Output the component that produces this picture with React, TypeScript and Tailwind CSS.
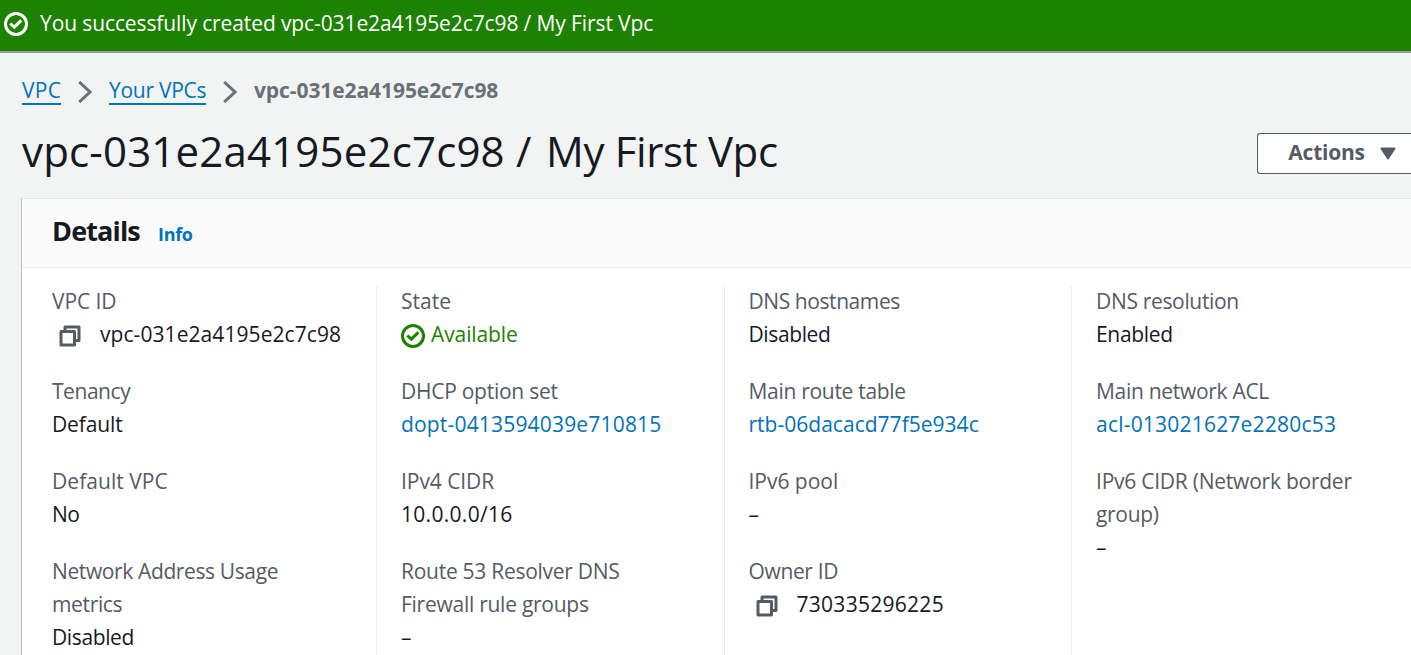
import type { ReactNode } from "react";

function StatusIcon({ className }: { className: string }) {
  return (
    <svg viewBox="0 0 24 24" className={`size-6 shrink-0 ${className}`} fill="none" stroke="currentColor" strokeWidth={3}>
      <circle cx="12" cy="12" r="10.5" />
      <path d="M6.3 11.5 L10.3 15.1 L17.3 8.3" />
    </svg>
  );
}

function CopyIcon() {
  return (
    <svg viewBox="0 0 22 22" className="mt-[7px] ml-[7px] size-[22px] shrink-0 text-[#545b64]" fill="none" stroke="currentColor" strokeWidth={3}>
      <path d="M6 6V2H20V15.5H16" strokeLinejoin="round" />
      <path d="M2 6.5H15.5V20H2Z" strokeLinejoin="round" />
    </svg>
  );
}

function Chevron() {
  return (
    <svg viewBox="0 0 14 22" className="mt-px h-[22px] w-[14px] shrink-0 text-[#687078]" fill="none" stroke="currentColor" strokeWidth={3}>
      <path d="M1.2 1 L12 11 L1.2 21" />
    </svg>
  );
}

function Field({ label, children }: { label: ReactNode; children: ReactNode }) {
  return (
    <div className="leading-[33px]">
      <div className="text-[#545b64]">{label}</div>
      <div className="flex h-[33px] text-[#16191f]">{children}</div>
    </div>
  );
}

function Column({ className, children }: { className: string; children: ReactNode }) {
  return (
    <div className={`shrink-0 ${className}`}>
      <div className="-mt-px flex flex-col gap-6">{children}</div>
    </div>
  );
}

export default function App() {
  return (
    <div className="flex h-[655px] w-[1411px] flex-col overflow-hidden bg-[#f2f3f3] font-['Open_Sans','Noto_Sans',sans-serif] text-[21px] whitespace-nowrap">
      <div className="flex h-[53px] shrink-0 border-b-2 border-[#959c9f] bg-[#1d8102] pl-1 text-white">
        <StatusIcon className="mt-3" />
        <span className="ml-3 pt-[7px] leading-[33px] tracking-[-0.11px]">
          You successfully created vpc-031e2a4195e2c7c98 / My First Vpc
        </span>
      </div>

      <nav className="mt-[27px] flex h-[26px] shrink-0 pl-[22px] leading-[22px]">
        <a className="h-[25px] w-[39px] border-b-2 border-[#0073bb] tracking-[0.3px] text-[#0073bb]">
          <span className="-mt-px block">VPC</span>
        </a>
        <span className="ml-[17px]">
          <Chevron />
        </span>
        <a className="ml-[17px] h-[25px] w-[97px] border-b-2 border-[#0073bb] tracking-[-0.28px] text-[#0073bb]">
          <span className="-mt-px block">Your VPCs</span>
        </a>
        <span className="ml-[17px]">
          <Chevron />
        </span>
        <span className="-mt-px ml-[17px] font-bold tracking-[-0.08px] text-[#687078]">vpc-031e2a4195e2c7c98</span>
      </nav>

      <div className="mt-[27px] flex h-[65px] shrink-0 justify-between pl-[22px]">
        <h1 className="-mt-[9px] text-[42px] leading-[54px] text-[#16191f]">
          <span className="tracking-[0.17px]">vpc-031e2a4195e2c7c98 /</span>
          <span className="ml-[4px] tracking-[-0.35px]"> My First Vpc</span>
        </h1>
        <button className="flex h-[41px] w-[154px] rounded-l-[3px] border border-r-0 border-[#545b64] bg-white pl-[29.5px] font-bold tracking-[-0.25px] text-[#545b64]">
          <span className="w-[78px] leading-[37px]">Actions</span>
          <svg viewBox="0 0 16 13" className="mt-[12.5px] ml-[14.5px] h-[13px] w-4 shrink-0" fill="currentColor" stroke="currentColor" strokeLinejoin="round" strokeWidth={2}>
            <path d="M1.5 1.5H14.5L8 11.5Z" />
          </svg>
        </button>
      </div>

      <section className="ml-[21px] flex flex-1 flex-col border-t border-l border-t-[#e6e8e8] border-l-[#bcc1c3] bg-white">
        <header className="flex h-[69px] shrink-0 items-baseline border-b border-[#eaeded] bg-[#fafafa] pt-[14px] pl-[30px] font-bold">
          <h2 className="w-[106px] text-[27px] leading-[36px] tracking-[-0.85px] text-[#16191f]">Details</h2>
          <a className="text-[18px] tracking-[-0.3px] text-[#0073bb]">Info</a>
        </header>

        <div className="flex flex-1 pt-[18px]">
          <Column className="w-[354px] pl-[30px]">
            <Field label={<span className="tracking-[-0.1px]">VPC ID</span>}>
              <CopyIcon />
              <span className="ml-[19px] tracking-[0.07px]">vpc-031e2a4195e2c7c98</span>
            </Field>
            <Field label={<span className="tracking-[-0.45px]">Tenancy</span>}>
              <span className="tracking-[-0.12px]">Default</span>
            </Field>
            <Field label={<span className="tracking-[0.05px]">Default VPC</span>}>
              <span className="tracking-[-0.5px]">No</span>
            </Field>
            <Field
              label={
                <>
                  <span className="tracking-[-0.38px]">Network Address Usage</span>
                  <br />
                  <span className="tracking-[-0.35px]">metrics</span>
                </>
              }
            >
              <span className="tracking-[-0.38px]">Disabled</span>
            </Field>
          </Column>

          <Column className="w-[348px] border-l border-[#eaeded] pl-[24px]">
            <Field label={<span className="tracking-[0.05px]">State</span>}>
              <StatusIcon className="mt-[6px] text-[#1d8102]" />
              <span className="ml-[6px] tracking-[-0.1px] text-[#1d8102]">Available</span>
            </Field>
            <Field label={<span className="tracking-[-0.26px]">DHCP option set</span>}>
              <a className="tracking-[0.18px] text-[#0073bb]">dopt-0413594039e710815</a>
            </Field>
            <Field label={<span className="tracking-[-0.06px]">IPv4 CIDR</span>}>
              <span className="tracking-[0.3px]">10.0.0.0/16</span>
            </Field>
            <Field
              label={
                <>
                  <span className="tracking-[-0.27px]">Route 53 Resolver DNS</span>
                  <br />
                  <span className="tracking-[-0.26px]">Firewall rule groups</span>
                </>
              }
            >
              –
            </Field>
          </Column>

          <Column className="w-[347px] border-l border-[#eaeded] pl-[23.5px]">
            <Field label={<span className="tracking-[-0.42px]">DNS hostnames</span>}>
              <span className="tracking-[-0.38px]">Disabled</span>
            </Field>
            <Field label={<span className="tracking-[-0.3px]">Main route table</span>}>
              <a className="tracking-[0.02px] text-[#0073bb]">rtb-06dacacd77f5e934c</a>
            </Field>
            <Field label={<span className="tracking-[-0.02px]">IPv6 pool</span>}>–</Field>
            <Field label={<span className="tracking-[-0.36px]">Owner ID</span>}>
              <CopyIcon />
              <span className="ml-[19px] tracking-[0.28px]">730335296225</span>
            </Field>
          </Column>

          <Column className="w-[340px] border-l border-[#eaeded] pl-[24px]">
            <Field label={<span className="tracking-[-0.33px]">DNS resolution</span>}>
              <span className="tracking-[-0.3px]">Enabled</span>
            </Field>
            <Field label={<span className="tracking-[-0.3px]">Main network ACL</span>}>
              <a className="tracking-[0.21px] text-[#0073bb]">acl-013021627e2280c53</a>
            </Field>
            <Field
              label={
                <>
                  <span className="tracking-[-0.24px]">IPv6 CIDR (Network border</span>
                  <br />
                  <span className="tracking-[-0.33px]">group)</span>
                </>
              }
            >
              –
            </Field>
          </Column>
        </div>
      </section>
    </div>
  );
}
